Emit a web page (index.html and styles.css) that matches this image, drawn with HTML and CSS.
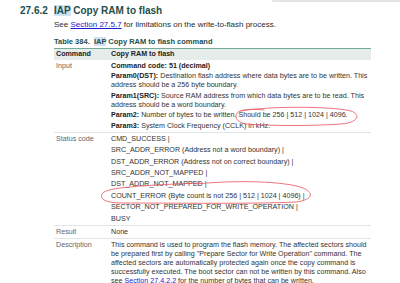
FILE: index.html
```html
<!DOCTYPE html>
<html>
<head>
<meta charset="utf-8">
<link rel="stylesheet" href="styles.css">
</head>
<body>
<div class="page">
  <div class="topbar"></div>
  <h2 class="heading"><span class="num">27.6.2</span><span><span class="hl">IAP</span> Copy RAM to flash</span></h2>
  <div class="content">
    <p class="intro">See <a href="#">Section 27.5.7</a> for limitations on the write-to-flash process.</p>
    <p class="caption">Table 384.&nbsp; <span class="hl">IAP</span> Copy RAM to flash command</p>
    <table class="cmd">
      <colgroup><col class="c1"><col class="c2"></colgroup>
      <thead>
        <tr><th>Command</th><th>Copy RAM to flash</th></tr>
      </thead>
      <tbody>
        <tr class="input">
          <td class="lbl">Input</td>
          <td>
            <p><b>Command code: 51 (decimal)</b></p>
            <p><b>Param0(DST):</b> Destination flash address where data bytes are to be written. This address should be a 256 byte boundary.</p>
            <p><b>Param1(SRC):</b> Source RAM address from which data bytes are to be read. This address should be a word boundary.</p>
            <p><b>Param2:</b> Number of bytes to be written. Should be 256 | 512 | 1024 | 4096.</p>
            <p><b>Param3:</b> System Clock Frequency (CCLK) in kHz.</p>
          </td>
        </tr>
        <tr class="status">
          <td class="lbl">Status code</td>
          <td>
            <p>CMD_SUCCESS |</p>
            <p>SRC_ADDR_ERROR (Address not a word boundary) |</p>
            <p>DST_ADDR_ERROR (Address not on correct boundary) |</p>
            <p>SRC_ADDR_NOT_MAPPED |</p>
            <p>DST_ADDR_NOT_MAPPED |</p>
            <p>COUNT_ERROR (Byte count is not 256 | 512 | 1024 | 4096) |</p>
            <p>SECTOR_NOT_PREPARED_FOR_WRITE_OPERATION |</p>
            <p>BUSY</p>
          </td>
        </tr>
        <tr>
          <td class="lbl">Result</td>
          <td>None</td>
        </tr>
        <tr class="desc">
          <td class="lbl">Description</td>
          <td>This command is used to program the flash memory. The affected sectors should be prepared first by calling "Prepare Sector for Write Operation" command. The affected sectors are automatically protected again once the copy command is successfully executed. The boot sector can not be written by this command. Also see <a href="#">Section 27.4.2.2</a> for the number of bytes that can be written.</td>
        </tr>
      </tbody>
    </table>
  </div>
  <svg class="marks" width="400" height="283" viewBox="0 0 400 283">
    <path d="M241,111 C268,106 330,106 351,111 C362,115 357,123 341,124 C312,126 272,126 246,124 C235,122 233,114 240,111 C246,109 256,109 264,110"/>
    <path d="M196,184 C235,180 285,181 303,188 C315,193 312,200 296,202 C255,204 170,203 122,203 C102,203 98,197 104,192 C112,187 150,185 200,183"/>
  </svg>
</div>
</body>
</html>
```

FILE: styles.css
```css
* {
  box-sizing: border-box;
  margin: 0;
  padding: 0;
}

html, body {
  background: #fff;
}

body {
  width: 400px;
  height: 283px;
  overflow: hidden;
  font-family: "Liberation Sans", Arial, sans-serif;
  color: #333;
}

.page {
  position: relative;
  width: 400px;
  height: 283px;
}

.topbar {
  height: 2px;
  margin-left: 272px;
  background: #e4e4e4;
  border-radius: 1px 0 0 1px;
}

.heading {
  display: flex;
  padding: 3px 0 0 20px;
  font-size: 10px;
  line-height: 12px;
  font-weight: bold;
  color: #1e4f4b;
}

.num {
  width: 34px;
}

.hl {
  background: #cfe2f5;
}

.content {
  margin-left: 54px;
  width: 317px;
}

.intro {
  margin-top: 3px;
  font-size: 8px;
  line-height: 10px;
  color: #2a2a2a;
}

.intro a,
.cmd a {
  color: #1c1cd6;
}

.caption {
  margin-top: 7px;
  font-size: 7.5px;
  line-height: 9px;
  font-weight: bold;
  color: #1e4f4b;
}

.cmd {
  margin-top: 2px;
  width: 100%;
  table-layout: fixed;
  border-collapse: collapse;
  font-size: 7.15px;
  line-height: 9px;
  color: #333;
}

.c1 {
  width: 55px;
}

.cmd th {
  text-align: left;
  background: #e6ecea;
  border-top: 1.5px solid #74aa9c;
  padding: 0.5px 2px 1.5px;
  color: #222;
}

.cmd td {
  vertical-align: top;
  padding: 1.5px 3px 1.5px 2px;
  border-bottom: 1px solid #e0e6e5;
}

.cmd tbody tr:last-child td {
  border-bottom: none;
}

.cmd td.lbl {
  color: #666;
}

.cmd b {
  color: #222;
}

.input p + p {
  margin-top: 1.6px;
}

.status p + p {
  margin-top: 2.4px;
}

.desc td {
  line-height: 9px;
}

.marks {
  position: absolute;
  left: 0;
  top: 0;
  pointer-events: none;
}

.marks path {
  fill: none;
  stroke: #ec5a63;
  stroke-width: 1;
  stroke-linecap: round;
  opacity: 0.85;
}
```
